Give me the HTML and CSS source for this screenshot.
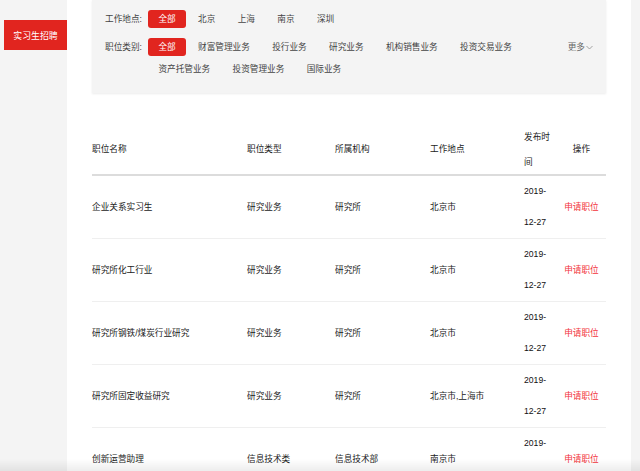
FILE: index.html
```html
<!DOCTYPE html>
<html lang="zh-CN">
<head>
<meta charset="utf-8">
<title>实习生招聘</title>
<link rel="stylesheet" href="styles.css">
</head>
<body>
<div class="page">
  <aside class="side">
    <div class="side-btn">实习生招聘</div>
  </aside>
  <main class="main">
    <section class="filter">
      <div class="frow">
        <div class="flabel">工作地点:</div>
        <div class="opts">
          <span class="opt active">全部</span>
          <span class="opt">北京</span>
          <span class="opt">上海</span>
          <span class="opt">南京</span>
          <span class="opt">深圳</span>
        </div>
      </div>
      <div class="frow">
        <div class="flabel">职位类别:</div>
        <div class="opts">
          <span class="opt active">全部</span>
          <span class="opt">财富管理业务</span>
          <span class="opt">投行业务</span>
          <span class="opt">研究业务</span>
          <span class="opt">机构销售业务</span>
          <span class="opt">投资交易业务</span>
          <span class="opt">资产托管业务</span>
          <span class="opt">投资管理业务</span>
          <span class="opt">国际业务</span>
        </div>
        <div class="more">更多<svg class="chev" width="7" height="5" viewBox="0 0 7 5"><path d="M0.5 1 L3.5 4 L6.5 1" fill="none" stroke="#999" stroke-width="0.9"/></svg></div>
      </div>
    </section>

    <table class="jobs">
      <colgroup>
        <col class="c1"><col class="c2"><col class="c3"><col class="c4"><col class="c5"><col class="c6">
      </colgroup>
      <thead>
        <tr><th>职位名称</th><th>职位类型</th><th>所属机构</th><th>工作地点</th><th>发布时间</th><th class="ops">操作</th></tr>
      </thead>
      <tbody>
        <tr><td>企业关系实习生</td><td>研究业务</td><td>研究所</td><td>北京市</td><td class="date">2019-12-27</td><td class="ops"><a class="apply">申请职位</a></td></tr>
        <tr><td>研究所化工行业</td><td>研究业务</td><td>研究所</td><td>北京市</td><td class="date">2019-12-27</td><td class="ops"><a class="apply">申请职位</a></td></tr>
        <tr><td>研究所钢铁/煤炭行业研究</td><td>研究业务</td><td>研究所</td><td>北京市</td><td class="date">2019-12-27</td><td class="ops"><a class="apply">申请职位</a></td></tr>
        <tr><td>研究所固定收益研究</td><td>研究业务</td><td>研究所</td><td>北京市,上海市</td><td class="date">2019-12-27</td><td class="ops"><a class="apply">申请职位</a></td></tr>
        <tr><td>创新运营助理</td><td>信息技术类</td><td>信息技术部</td><td>南京市</td><td class="date">2019-12-27</td><td class="ops"><a class="apply">申请职位</a></td></tr>
      </tbody>
    </table>
  </main>
</div>
<div class="bottom-fade"></div>
</body>
</html>
```

FILE: styles.css
```css
html, body {
  margin: 0;
  padding: 0;
}

body {
  background: #f4f4f4;
  font-family: "Liberation Sans", "Noto Sans CJK SC", sans-serif;
  font-size: 8.64px;
  color: #222;
}

.page {
  display: flex;
  min-height: 100vh;
}

.side {
  width: 67px;
  flex: none;
}

.side-btn {
  margin: 20px 0 0 4px;
  width: 63px;
  height: 30px;
  background: #e1251f;
  color: #fff;
  display: flex;
  align-items: center;
  justify-content: center;
  font-size: 8.9px;
}

.main {
  width: 564px;
  flex: none;
  background: #fff;
  box-sizing: border-box;
  padding: 0 25px 0 25px;
}

.filter {
  background: #f4f4f4;
  box-shadow: 0 1px 2px rgba(0, 0, 0, 0.08);
  padding: 10px 13px 11px 13px;
}

.frow {
  display: flex;
  align-items: flex-start;
}

.frow + .frow {
  margin-top: 6px;
}

.flabel {
  width: 43px;
  flex: none;
  line-height: 18px;
  color: #444;
}

.opts {
  flex: 1;
  display: flex;
  flex-wrap: wrap;
}

.opt {
  height: 18px;
  line-height: 18px;
  padding: 0 10.4px;
  margin: 0 1.6px 4px 0;
  color: #444;
  border-radius: 3px;
  white-space: nowrap;
}

.opt.active {
  background: #e1251f;
  color: #fff;
}

.more {
  flex: none;
  line-height: 18px;
  color: #666;
  display: flex;
  align-items: center;
  gap: 1px;
}

.chev {
  display: block;
  margin-top: 1px;
}

.jobs {
  margin-top: 32px;
  width: 514px;
  border-collapse: collapse;
  table-layout: fixed;
}

.c1 { width: 155px; }
.c2 { width: 88px; }
.c3 { width: 95px; }
.c4 { width: 94px; }
.c5 { width: 33px; }
.c6 { width: 49px; }

.jobs th {
  font-weight: normal;
  text-align: left;
  padding: 0;
  line-height: 24.5px;
  border-bottom: 2px solid #dcdcdc;
  vertical-align: middle;
}

.jobs td {
  padding: 0;
  line-height: 31px;
  border-bottom: 1px solid #efefef;
  vertical-align: middle;
}

.jobs .date {
  color: #111;
}

.jobs .ops {
  text-align: center;
}

.apply {
  color: #f2333b;
}

.bottom-fade {
  position: fixed;
  left: 0;
  right: 0;
  bottom: 0;
  height: 12px;
  background: linear-gradient(rgba(0, 0, 0, 0), rgba(0, 0, 0, 0.07));
  pointer-events: none;
}
```
